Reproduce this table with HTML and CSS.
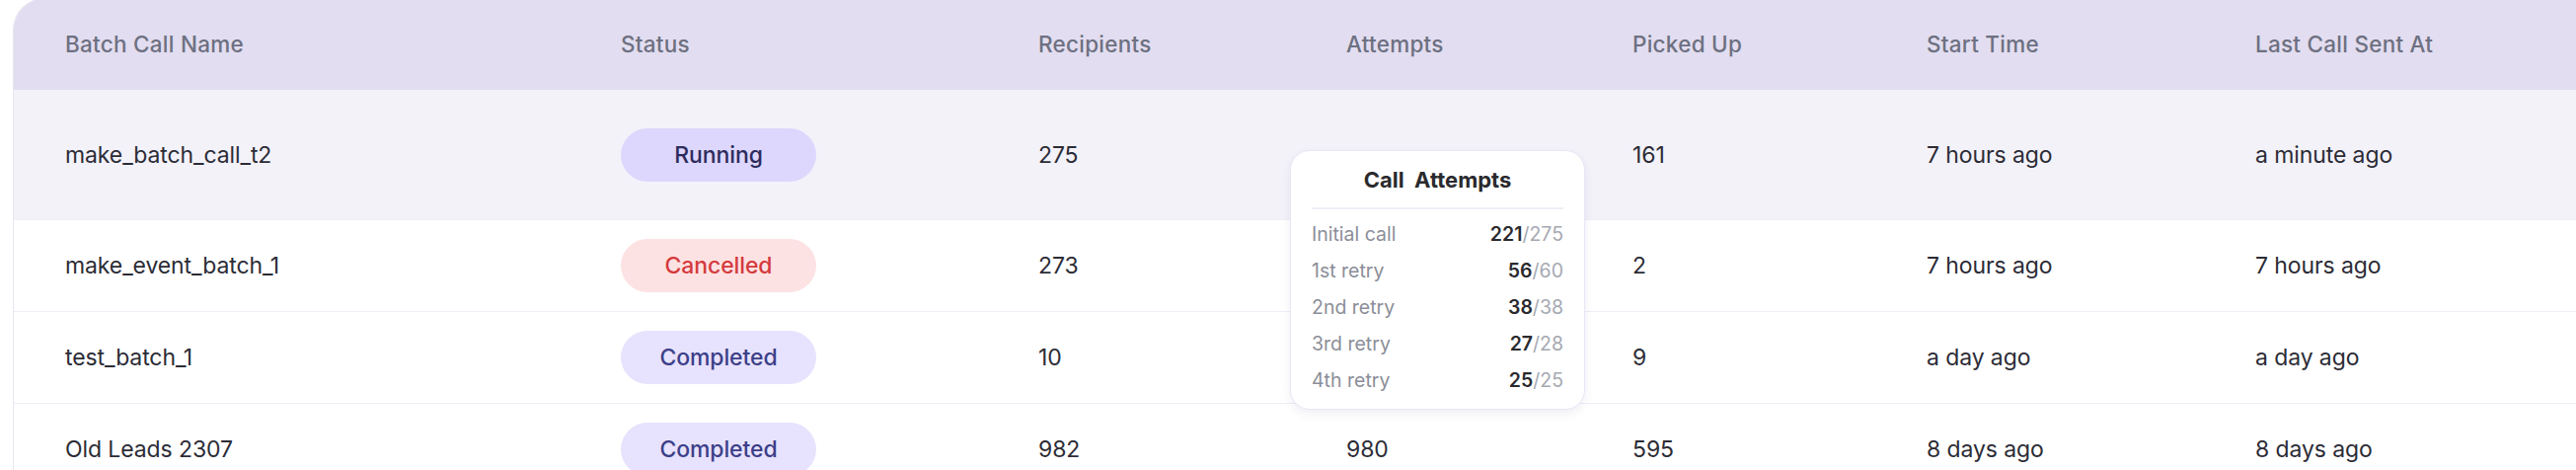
FILE: index.html
```html
<!DOCTYPE html>
<html lang="en">
<head>
<meta charset="utf-8">
<title>Batch Calls</title>
<link rel="stylesheet" href="styles.css">
</head>
<body>
<div class="table">
  <div class="row head">
    <div class="cell">Batch Call Name</div>
    <div class="cell">Status</div>
    <div class="cell">Recipients</div>
    <div class="cell">Attempts</div>
    <div class="cell">Picked Up</div>
    <div class="cell">Start Time</div>
    <div class="cell">Last Call Sent At</div>
  </div>
  <div class="row body-row active">
    <div class="cell">make_batch_call_t2</div>
    <div class="cell"><span class="badge running">Running</span></div>
    <div class="cell">275</div>
    <div class="cell"></div>
    <div class="cell">161</div>
    <div class="cell">7 hours ago</div>
    <div class="cell">a minute ago</div>
  </div>
  <div class="row body-row">
    <div class="cell">make_event_batch_1</div>
    <div class="cell"><span class="badge cancelled">Cancelled</span></div>
    <div class="cell">273</div>
    <div class="cell"></div>
    <div class="cell">2</div>
    <div class="cell">7 hours ago</div>
    <div class="cell">7 hours ago</div>
  </div>
  <div class="row body-row">
    <div class="cell">test_batch_1</div>
    <div class="cell"><span class="badge completed">Completed</span></div>
    <div class="cell">10</div>
    <div class="cell"></div>
    <div class="cell">9</div>
    <div class="cell">a day ago</div>
    <div class="cell">a day ago</div>
  </div>
  <div class="row body-row">
    <div class="cell">Old Leads 2307</div>
    <div class="cell"><span class="badge completed">Completed</span></div>
    <div class="cell">982</div>
    <div class="cell">980</div>
    <div class="cell">595</div>
    <div class="cell">8 days ago</div>
    <div class="cell">8 days ago</div>
  </div>

  <div class="tooltip">
    <div class="tt-title">Call&nbsp; Attempts</div>
    <div class="tt-rows">
      <div class="tt-row"><span class="tt-label">Initial call</span><span class="tt-val"><b>221</b>/275</span></div>
      <div class="tt-row"><span class="tt-label">1st retry</span><span class="tt-val"><b>56</b>/60</span></div>
      <div class="tt-row"><span class="tt-label">2nd retry</span><span class="tt-val"><b>38</b>/38</span></div>
      <div class="tt-row"><span class="tt-label">3rd retry</span><span class="tt-val"><b>27</b>/28</span></div>
      <div class="tt-row"><span class="tt-label">4th retry</span><span class="tt-val"><b>25</b>/25</span></div>
    </div>
  </div>
</div>
</body>
</html>
```

FILE: styles.css
```css
html, body {
  margin: 0;
  padding: 0;
  background: #ffffff;
  overflow: hidden;
}

body {
  font-family: Inter, "Noto Sans", sans-serif;
  color: #2c2c36;
}

.table {
  position: relative;
  margin: -2px 0 0 13px;
  width: 2660px;
  border-left: 1px solid #e8e6f0;
  border-top-left-radius: 32px;
}

.row {
  display: grid;
  grid-template-columns: 563px 423px 312px 290px 298px 333px 1fr;
  padding-left: 52px;
  align-items: center;
}

.head {
  height: 93px;
  background: #e2ddf0;
  border-top-left-radius: 32px;
  color: #6d7081;
  font-size: 22.5px;
  font-weight: 500;
  letter-spacing: 0.25px;
}

.body-row {
  height: 92px;
  border-bottom: 1px solid #efedf6;
  font-size: 23px;
  font-weight: 400;
  letter-spacing: -0.1px;
}

.body-row.active {
  height: 131px;
  background: #f3f2f9;
}

.badge {
  display: inline-flex;
  align-items: center;
  justify-content: center;
  width: 198px;
  height: 54px;
  border-radius: 27px;
  font-size: 23px;
  font-weight: 500;
}

.running {
  background: #ddd7fd;
  color: #2e2b5c;
}

.cancelled {
  background: #fde2e3;
  color: #d43a3c;
}

.completed {
  background: #e7e2fd;
  color: #3c3f88;
}

.tooltip {
  position: absolute;
  left: 1293px;
  top: 154px;
  width: 299px;
  height: 263px;
  box-sizing: border-box;
  background: #ffffff;
  border: 1px solid #e9e6f6;
  border-radius: 20px;
  box-shadow: 0 4px 10px rgba(60, 50, 120, 0.08);
  padding: 14px 21px 11px;
}

.tt-title {
  text-align: center;
  font-size: 22px;
  font-weight: 700;
  line-height: 30px;
  color: #2a2a2e;
  padding-bottom: 13px;
  border-bottom: 2px solid #efedf6;
}

.tt-rows {
  margin-top: 7px;
}

.tt-row {
  display: flex;
  justify-content: space-between;
  align-items: center;
  height: 36.8px;
  font-size: 19.5px;
}

.tt-label {
  color: #8b8e98;
}

.tt-val {
  color: #a6a9b2;
}

.tt-val b {
  color: #2a2a2e;
  font-weight: 600;
}
```
